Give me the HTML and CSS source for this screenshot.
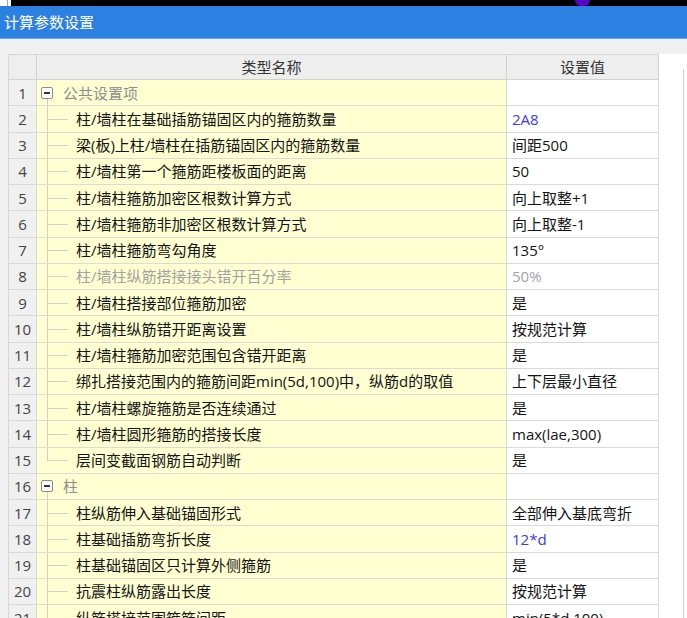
FILE: index.html
```html
<!DOCTYPE html>
<html lang="zh-CN">
<head>
<meta charset="utf-8">
<title>计算参数设置</title>
<link rel="stylesheet" href="styles.css">
</head>
<body>
<div class="topbar"><div class="tb-left"></div><div class="tb-gap"></div><div class="tb-blob"></div></div>
<div class="titlebar">计算参数设置</div>
<div class="content">
  <div class="grid">
    <div class="cell hd"></div><div class="cell hd">类型名称</div><div class="cell hd">设置值</div>

    <div class="cell num">1</div><div class="cell name"><span class="toggle"></span><span class="glabel">公共设置项</span></div><div class="cell val"></div>
    <div class="cell num">2</div><div class="cell name"><span class="branch"></span><span>柱/墙柱在基础插筋锚固区内的箍筋数量</span></div><div class="cell val blue">2A8</div>
    <div class="cell num">3</div><div class="cell name"><span class="branch"></span><span>梁(板)上柱/墙柱在插筋锚固区内的箍筋数量</span></div><div class="cell val">间距500</div>
    <div class="cell num">4</div><div class="cell name"><span class="branch"></span><span>柱/墙柱第一个箍筋距楼板面的距离</span></div><div class="cell val">50</div>
    <div class="cell num">5</div><div class="cell name"><span class="branch"></span><span>柱/墙柱箍筋加密区根数计算方式</span></div><div class="cell val">向上取整+1</div>
    <div class="cell num">6</div><div class="cell name"><span class="branch"></span><span>柱/墙柱箍筋非加密区根数计算方式</span></div><div class="cell val">向上取整-1</div>
    <div class="cell num">7</div><div class="cell name"><span class="branch"></span><span>柱/墙柱箍筋弯勾角度</span></div><div class="cell val">135°</div>
    <div class="cell num">8</div><div class="cell name dis"><span class="branch"></span><span>柱/墙柱纵筋搭接接头错开百分率</span></div><div class="cell val dis">50%</div>
    <div class="cell num">9</div><div class="cell name"><span class="branch"></span><span>柱/墙柱搭接部位箍筋加密</span></div><div class="cell val">是</div>
    <div class="cell num">10</div><div class="cell name"><span class="branch"></span><span>柱/墙柱纵筋错开距离设置</span></div><div class="cell val">按规范计算</div>
    <div class="cell num">11</div><div class="cell name"><span class="branch"></span><span>柱/墙柱箍筋加密范围包含错开距离</span></div><div class="cell val">是</div>
    <div class="cell num">12</div><div class="cell name"><span class="branch"></span><span>绑扎搭接范围内的箍筋间距min(5d,100)中，纵筋d的取值</span></div><div class="cell val">上下层最小直径</div>
    <div class="cell num">13</div><div class="cell name"><span class="branch"></span><span>柱/墙柱螺旋箍筋是否连续通过</span></div><div class="cell val">是</div>
    <div class="cell num">14</div><div class="cell name"><span class="branch"></span><span>柱/墙柱圆形箍筋的搭接长度</span></div><div class="cell val">max(lae,300)</div>
    <div class="cell num">15</div><div class="cell name"><span class="branch last"></span><span>层间变截面钢筋自动判断</span></div><div class="cell val">是</div>

    <div class="cell num">16</div><div class="cell name"><span class="toggle"></span><span class="glabel">柱</span></div><div class="cell val"></div>
    <div class="cell num">17</div><div class="cell name"><span class="branch"></span><span>柱纵筋伸入基础锚固形式</span></div><div class="cell val">全部伸入基底弯折</div>
    <div class="cell num">18</div><div class="cell name"><span class="branch"></span><span>柱基础插筋弯折长度</span></div><div class="cell val blue">12*d</div>
    <div class="cell num">19</div><div class="cell name"><span class="branch"></span><span>柱基础锚固区只计算外侧箍筋</span></div><div class="cell val">是</div>
    <div class="cell num">20</div><div class="cell name"><span class="branch"></span><span>抗震柱纵筋露出长度</span></div><div class="cell val">按规范计算</div>
    <div class="cell num">21</div><div class="cell name"><span class="branch"></span><span>纵筋搭接范围箍筋间距</span></div><div class="cell val">min(5*d,100)</div>
  </div>
  <div class="side"><div class="side-line"></div></div>
</div>
</body>
</html>
```

FILE: styles.css
```css
html, body {
  margin: 0;
  padding: 0;
}
body {
  width: 687px;
  height: 618px;
  overflow: hidden;
  background: #f0f0f0;
  font-family: "Open Sans", "Noto Sans CJK SC", sans-serif;
  color: #1e1e1e;
}
.topbar {
  height: 6px;
  display: flex;
  background: #000;
}
.tb-left {
  width: 11px;
  background: linear-gradient(to right, #fff 7px, #a8a8a8 7px, #a8a8a8 8px, #fff 8px);
}
.tb-gap {
  width: 564px;
}
.tb-blob {
  width: 15px;
  background: #5a06c6;
  border-radius: 0 0 6px 6px;
}
.titlebar {
  height: 33px;
  line-height: 32px;
  background: #2c80e1;
  color: #fff;
  font-size: 15px;
  padding-left: 4px;
  border-bottom: 1px solid #6fa6ea;
  box-sizing: border-box;
}
.content {
  display: flex;
  padding: 15px 0 0 8px;
  height: 564px;
  overflow: hidden;
}
.grid {
  display: grid;
  grid-template-columns: 28px 470px 152px;
  grid-template-rows: 25px repeat(21, 26.25px);
  border-top: 1px solid #d6d6d6;
  border-left: 1px solid #d6d6d6;
  align-self: flex-start;
  font-size: 15px;
}
.cell {
  box-sizing: border-box;
  border-right: 1px solid #dadada;
  border-bottom: 1px solid #dadada;
  display: flex;
  align-items: center;
  white-space: nowrap;
  overflow: hidden;
  line-height: 20px;
}
.hd {
  background: #eeeeee;
  justify-content: center;
  color: #333;
  border-color: #d2d2d2;
}
.num {
  background: #f0f0f0;
  justify-content: center;
  color: #444;
  border-color: #d8d8d8;
}
.name {
  background: #ffffd2;
  color: #141414;
}
.val {
  background: #fff;
  padding-left: 5px;
  color: #141414;
}
.blue {
  color: #3a3af5;
}
.dis {
  color: #a2a2a2;
}
.branch {
  position: relative;
  width: 39px;
  align-self: stretch;
  flex: none;
}
.branch::before {
  content: "";
  position: absolute;
  left: 10px;
  top: 0;
  bottom: 0;
  width: 1px;
  background: #cfcfcf;
}
.branch.last::before {
  bottom: 50%;
}
.branch::after {
  content: "";
  position: absolute;
  left: 10px;
  top: 50%;
  width: 21px;
  height: 1px;
  background: #cfcfcf;
}
.toggle {
  position: relative;
  width: 12px;
  height: 12px;
  margin-left: 4px;
  box-sizing: border-box;
  border: 1px solid #8a8a8a;
  border-radius: 2px;
  background: #fff;
  flex: none;
}
.toggle::before {
  content: "";
  position: absolute;
  left: 2px;
  top: 4px;
  width: 6px;
  height: 2px;
  background: #333;
}
.toggle::after {
  content: "";
  position: absolute;
  left: 5px;
  top: 11px;
  width: 1px;
  height: 10px;
  background: #cfcfcf;
}
.glabel {
  margin-left: 10px;
  color: #8e8e8e;
}
.side {
  flex: 1;
  background: #fff;
}
.side-line {
  margin-left: 24px;
  margin-top: 15px;
  height: 100%;
  border-left: 1px solid #d0d0d0;
}
```
